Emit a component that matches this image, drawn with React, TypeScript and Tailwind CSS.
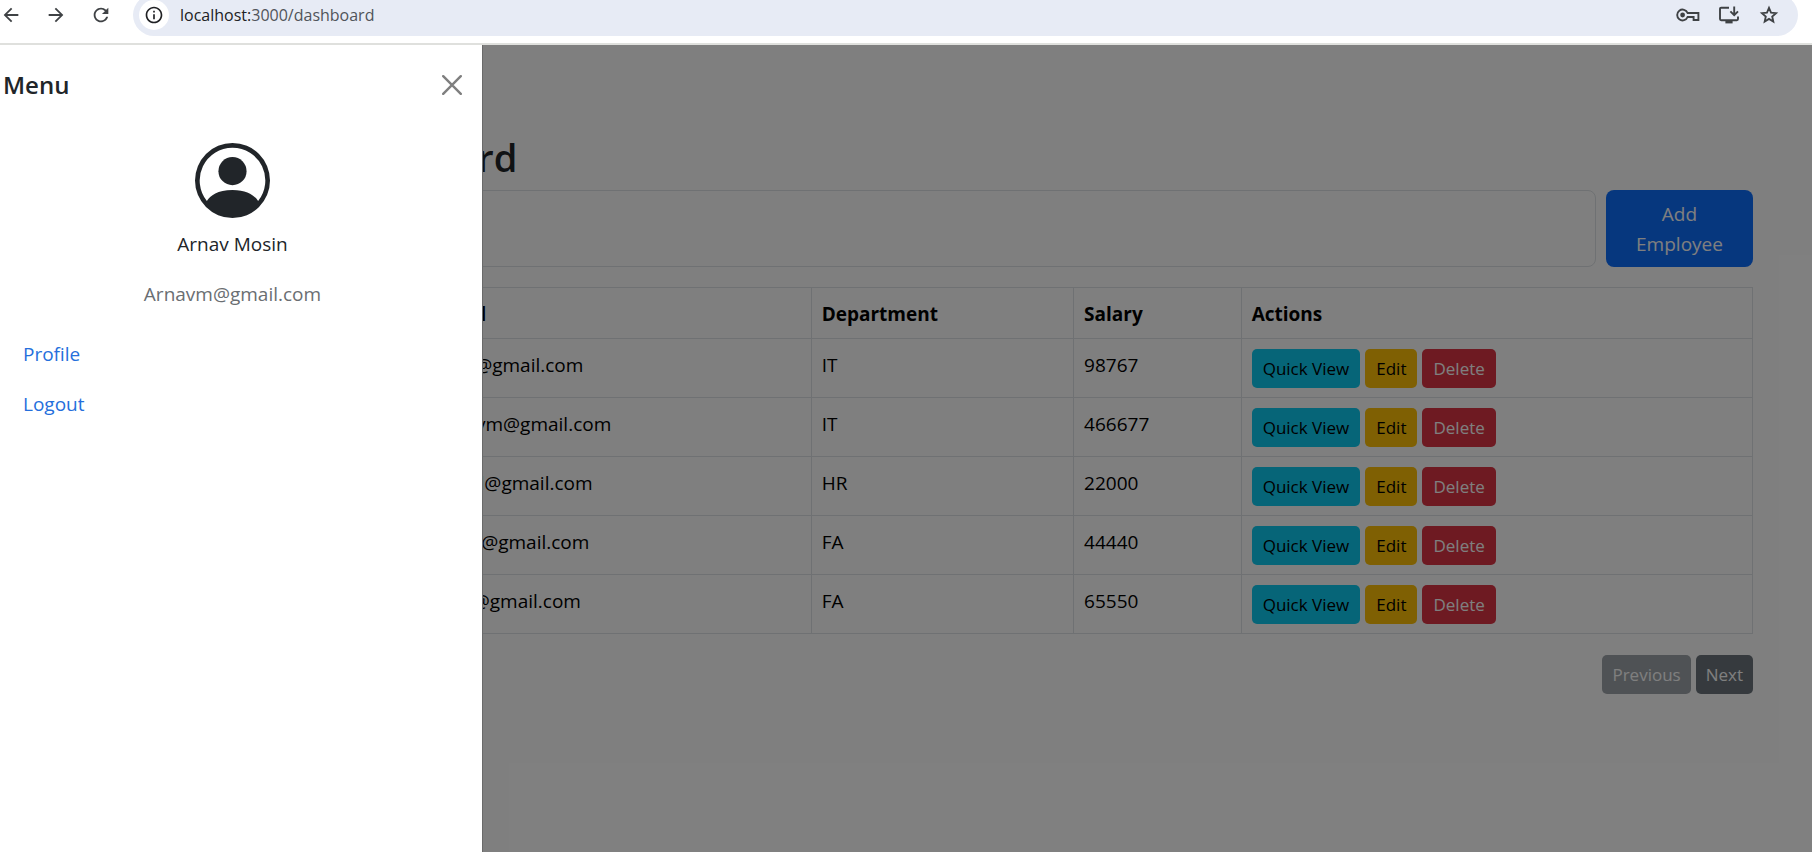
import { BsPersonCircle } from "react-icons/bs";
import { MdArrowBack, MdArrowForward, MdInfoOutline, MdRefresh } from "react-icons/md";

const employees = [
  { name: "Amit", email: "Amit@gmail.com", department: "IT", salary: "98767" },
  { name: "Arnav Mosin", email: "Arnavm@gmail.com", department: "IT", salary: "466677" },
  { name: "Rahul", email: "Rahul@gmail.com", department: "HR", salary: "22000" },
  { name: "Neha", email: "Neha@gmail.com", department: "FA", salary: "44440" },
  { name: "Rani", email: "Rani@gmail.com", department: "FA", salary: "65550" },
];

const headings = [
  { label: "Name", style: "w-[21.5%] pl-[30px]" },
  { label: "Email", style: "w-[22.9%] pl-2.5" },
  { label: "Department", style: "w-[15.5%] pl-2.5" },
  { label: "Salary", style: "w-[9.9%] pl-2.5" },
  { label: "Actions", style: "w-[30.2%] pl-2.5" },
];

function KeyIcon() {
  return (
    <svg width="24" height="14" viewBox="0 0 24 14" fill="none" stroke="currentColor" strokeWidth="1.9">
      <path d="M11.6 5H22.4V12H17.6V9H11.6A5.4 5.4 0 1 1 11.6 5Z" />
      <circle cx="6.6" cy="7" r="2.4" fill="currentColor" stroke="none" />
    </svg>
  );
}

function InstallIcon() {
  return (
    <svg width="20" height="18" viewBox="0 0 20 18" fill="none" stroke="currentColor" strokeWidth="1.9">
      <path d="M10 1.7H2.2Q1 1.7 1 2.9V13Q1 14.2 2.2 14.2H17.8Q19 14.2 19 13V10.6" />
      <path d="M15.2.6V9M11.4 5.4 15.2 9.2 19 5.4" />
      <path d="M6.4 14.2H13.6V17.4H6.4Z" fill="currentColor" stroke="none" />
    </svg>
  );
}

function StarIcon() {
  return (
    <svg width="22" height="22" viewBox="0 0 24 24" fill="none" stroke="currentColor" strokeWidth="2">
      <path d="M12 4.3 14.2 9.5 19.7 10 15.5 13.7 16.7 19.1 12 16.2 7.3 19.1 8.5 13.7 4.3 10 9.8 9.5Z" />
    </svg>
  );
}

function BrowserBar() {
  return (
    <header className="flex h-[45px] items-start overflow-hidden border-b-2 border-[#dfe0dd] bg-white pr-3.5 text-[#3f4245]">
      <nav aria-label="Browser" className="flex h-[30px] w-[133px] shrink-0 items-center gap-[23px]">
        <button type="button" aria-label="Back">
          <MdArrowBack size={22} />
        </button>
        <button type="button" aria-label="Forward">
          <MdArrowForward size={22} />
        </button>
        <button type="button" aria-label="Reload">
          <MdRefresh size={22} />
        </button>
      </nav>
      <div className="-mt-1.5 flex h-[42px] flex-1 items-center rounded-full bg-[#e7ebf5] pr-[18px] pl-1.5">
        <button
          type="button"
          aria-label="Site information"
          className="flex size-[30px] items-center justify-center rounded-full bg-white text-[#202124]"
        >
          <MdInfoOutline size={20} />
        </button>
        <p className="ml-[11px] flex-1 text-[16px] text-[#50545a]">
          <span className="text-[#202124]">localhost:</span>3000/dashboard
        </p>
        <div className="flex items-center gap-[19px]">
          <button type="button" aria-label="Passwords">
            <KeyIcon />
          </button>
          <button type="button" aria-label="Install app">
            <InstallIcon />
          </button>
          <button type="button" aria-label="Bookmark">
            <StarIcon />
          </button>
        </div>
      </div>
    </header>
  );
}

function Dashboard() {
  return (
    <main className="px-[59px] pt-[88px] pb-10">
      <h1 className="mb-[9px] pl-[68px] text-[38px] leading-[48px] font-semibold">Employee Dashboard</h1>
      <div className="mb-5 flex h-[77px] gap-2.5">
        <input
          type="text"
          aria-label="Search employees"
          className="min-w-0 flex-1 rounded-lg border border-[#dee2e6] px-4"
        />
        <button type="button" className="w-[147px] rounded-lg bg-[#0d6efd] px-4 pt-px leading-[30px] text-white">
          Add Employee
        </button>
      </div>
      <table className="w-full table-fixed border-collapse text-left text-black">
        <thead>
          <tr>
            {headings.map((h) => (
              <th
                key={h.label}
                className={`${h.style} border border-[#dee2e6] pt-[11px] pr-2.5 pb-[9px] leading-[30px] font-bold`}
              >
                {h.label}
              </th>
            ))}
          </tr>
        </thead>
        <tbody>
          {employees.map((e) => (
            <tr key={e.email} className="align-top">
              <td className="border border-[#dee2e6] pt-[11px] pr-2.5 pl-[30px]">{e.name}</td>
              <td className="border border-[#dee2e6] px-2.5 pt-[11px]">{e.email}</td>
              <td className="border border-[#dee2e6] px-2.5 pt-[11px]">{e.department}</td>
              <td className="border border-[#dee2e6] px-2.5 pt-[11px]">{e.salary}</td>
              <td className="border border-[#dee2e6] px-2.5 pt-2.5 pb-[9px]">
                <div className="flex gap-[5px] text-[17px] leading-[28px]">
                  <button type="button" className="rounded-[5px] bg-[#0dcaf0] px-[11px] pt-1.5 pb-[5px]">
                    Quick View
                  </button>
                  <button type="button" className="rounded-[5px] bg-[#ffc107] px-[11px] pt-1.5 pb-[5px]">
                    Edit
                  </button>
                  <button type="button" className="rounded-[5px] bg-[#dc3545] px-[11px] pt-1.5 pb-[5px] text-white">
                    Delete
                  </button>
                </div>
              </td>
            </tr>
          ))}
        </tbody>
      </table>
      <div className="mt-[21px] flex justify-end gap-[5px] text-[17px] leading-[28px] text-white">
        <button type="button" disabled className="rounded-[5px] bg-[#6c757d] px-2.5 pt-1.5 pb-[5px] opacity-65">
          Previous
        </button>
        <button type="button" className="rounded-[5px] bg-[#6c757d] px-2.5 pt-1.5 pb-[5px]">
          Next
        </button>
      </div>
    </main>
  );
}

function MenuDrawer() {
  return (
    <aside className="absolute inset-y-0 left-0 w-[483px] border-r border-[#6a6a6a] bg-white pr-5 pl-[3px]">
      <div className="flex h-[79px] items-center justify-between">
        <h2 className="text-[24px] font-semibold">Menu</h2>
        <button type="button" aria-label="Close menu" className="text-[#7f7f7f]">
          <svg width="20" height="20" viewBox="0 0 20 20" fill="none" stroke="currentColor" strokeWidth="2.4" strokeLinecap="round">
            <path d="M1.2 1.2 18.8 18.8M18.8 1.2 1.2 18.8" />
          </svg>
        </button>
      </div>
      <div className="flex flex-col items-center pt-[19px]">
        <BsPersonCircle size={75} />
        <p className="mt-[11px]">Arnav Mosin</p>
        <p className="mt-5 text-[#6a6e72]">Arnavm@gmail.com</p>
      </div>
      <nav aria-label="Menu" className="mt-[30px] flex flex-col items-start gap-5 px-5 text-[#256fdc]">
        <a href="#profile">Profile</a>
        <a href="#logout">Logout</a>
      </nav>
    </aside>
  );
}

export default function App() {
  return (
    <div className="flex min-h-screen flex-col bg-white font-['Open_Sans','Noto_Sans',sans-serif] text-[19px] leading-[30px] text-[#212529]">
      <BrowserBar />
      <div className="relative flex-1">
        <Dashboard />
        <div className="absolute inset-0 bg-black/50" />
        <MenuDrawer />
      </div>
    </div>
  );
}
